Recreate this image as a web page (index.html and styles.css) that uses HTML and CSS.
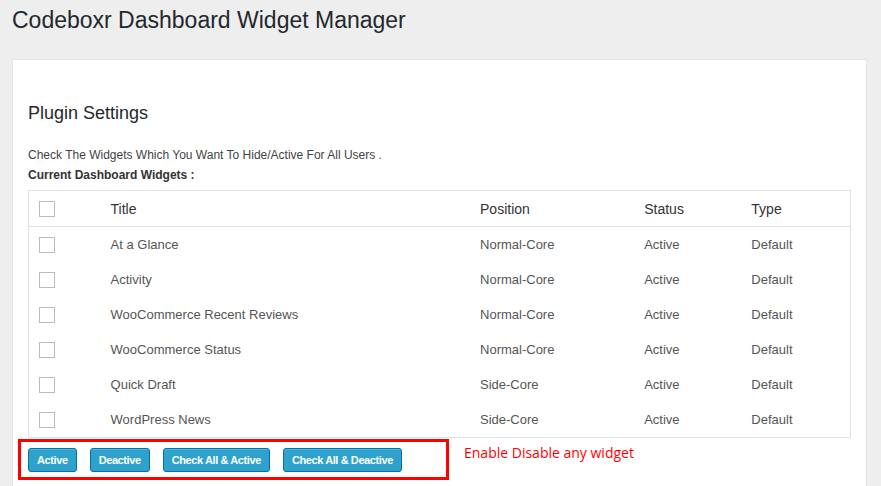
FILE: index.html
```html
<!DOCTYPE html>
<html>
<head>
<meta charset="utf-8">
<link rel="stylesheet" href="styles.css">
</head>
<body>
<h1 class="page-title">Codeboxr Dashboard Widget Manager</h1>
<div class="card">
  <h2 class="section-title">Plugin Settings</h2>
  <p class="intro">Check The Widgets Which You Want To Hide/Active For All Users .</p>
  <p class="label">Current Dashboard Widgets :</p>
  <table class="widgets">
    <colgroup>
      <col class="c-check"><col class="c-title"><col class="c-pos"><col class="c-status"><col class="c-type">
    </colgroup>
    <thead>
      <tr><th><span class="cb"></span></th><th>Title</th><th>Position</th><th>Status</th><th>Type</th></tr>
    </thead>
    <tbody>
      <tr><td><span class="cb"></span></td><td>At a Glance</td><td>Normal-Core</td><td>Active</td><td>Default</td></tr>
      <tr><td><span class="cb"></span></td><td>Activity</td><td>Normal-Core</td><td>Active</td><td>Default</td></tr>
      <tr><td><span class="cb"></span></td><td>WooCommerce Recent Reviews</td><td>Normal-Core</td><td>Active</td><td>Default</td></tr>
      <tr><td><span class="cb"></span></td><td>WooCommerce Status</td><td>Normal-Core</td><td>Active</td><td>Default</td></tr>
      <tr><td><span class="cb"></span></td><td>Quick Draft</td><td>Side-Core</td><td>Active</td><td>Default</td></tr>
      <tr><td><span class="cb"></span></td><td>WordPress News</td><td>Side-Core</td><td>Active</td><td>Default</td></tr>
    </tbody>
  </table>
  <div class="actions">
    <button class="btn">Active</button>
    <button class="btn">Deactive</button>
    <button class="btn">Check All &amp; Active</button>
    <button class="btn">Check All &amp; Deactive</button>
    <div class="highlight"></div>
    <div class="note">Enable Disable any widget</div>
  </div>
</div>
</body>
</html>
```
FILE: styles.css
```css
html, body {
  margin: 0;
  padding: 0;
  background: #eeeeee;
  font-family: "Liberation Sans", Arial, sans-serif;
  overflow: hidden;
}
.page-title {
  margin: 0;
  padding: 5px 0 0 12px;
  height: 55px;
  box-sizing: border-box;
  font-size: 23px;
  font-weight: normal;
  color: #23282d;
  line-height: 30px;
}
.card {
  margin-left: 12px;
  width: 855px;
  box-sizing: border-box;
  background: #fff;
  border: 1px solid #e5e5e5;
  margin-top: 4px;
  padding: 41px 15px 40px 15px;
  height: 500px;
}
.section-title {
  margin: 0;
  font-size: 18px;
  font-weight: normal;
  color: #23282d;
  line-height: 24px;
}
.intro {
  margin: 22px 0 0 0;
  font-size: 12px;
  line-height: 16px;
  color: #444;
}
.label {
  margin: 4px 0 0 0;
  font-size: 12px;
  line-height: 16px;
  font-weight: bold;
  color: #333;
}
.widgets {
  margin-top: 7px;
  width: 823px;
  border-collapse: collapse;
  table-layout: fixed;
  border: 1px solid #e1e1e1;
}
.c-check { width: 72px; }
.c-title { width: 369px; }
.c-pos { width: 164px; }
.c-status { width: 107px; }
.c-type { width: 109px; }
.widgets th {
  height: 35px;
  padding: 0 0 0 10px;
  text-align: left;
  font-weight: normal;
  font-size: 14px;
  color: #333;
  border-bottom: 1px solid #e1e1e1;
  vertical-align: middle;
}
.widgets td {
  height: 35px;
  padding: 0 0 0 10px;
  font-size: 13px;
  color: #555;
  vertical-align: middle;
}
.cb {
  display: block;
  width: 14px;
  height: 14px;
  border: 1px solid #bbb;
  background: #fff;
  margin-top: 1px;
}
.actions {
  position: relative;
  display: flex;
  gap: 13px;
  padding: 10px 0 0 0;
}
.btn {
  height: 24px;
  padding: 0 8px;
  background: #2ea2cc;
  border: 1px solid #0074a2;
  border-radius: 3px;
  box-shadow: inset 0 1px 0 rgba(120, 200, 230, 0.5);
  color: #fff;
  font-family: "Liberation Sans", Arial, sans-serif;
  font-weight: bold;
  font-size: 11px;
  letter-spacing: -0.4px;
}
.highlight {
  position: absolute;
  left: -10px;
  top: 1px;
  width: 425px;
  height: 35px;
  border: 3px solid #ff0000;
}
.note {
  position: absolute;
  left: 436px;
  top: 5px;
  font-family: "Open Sans", sans-serif;
  font-size: 14px;
  color: #ff0000;
}
```
